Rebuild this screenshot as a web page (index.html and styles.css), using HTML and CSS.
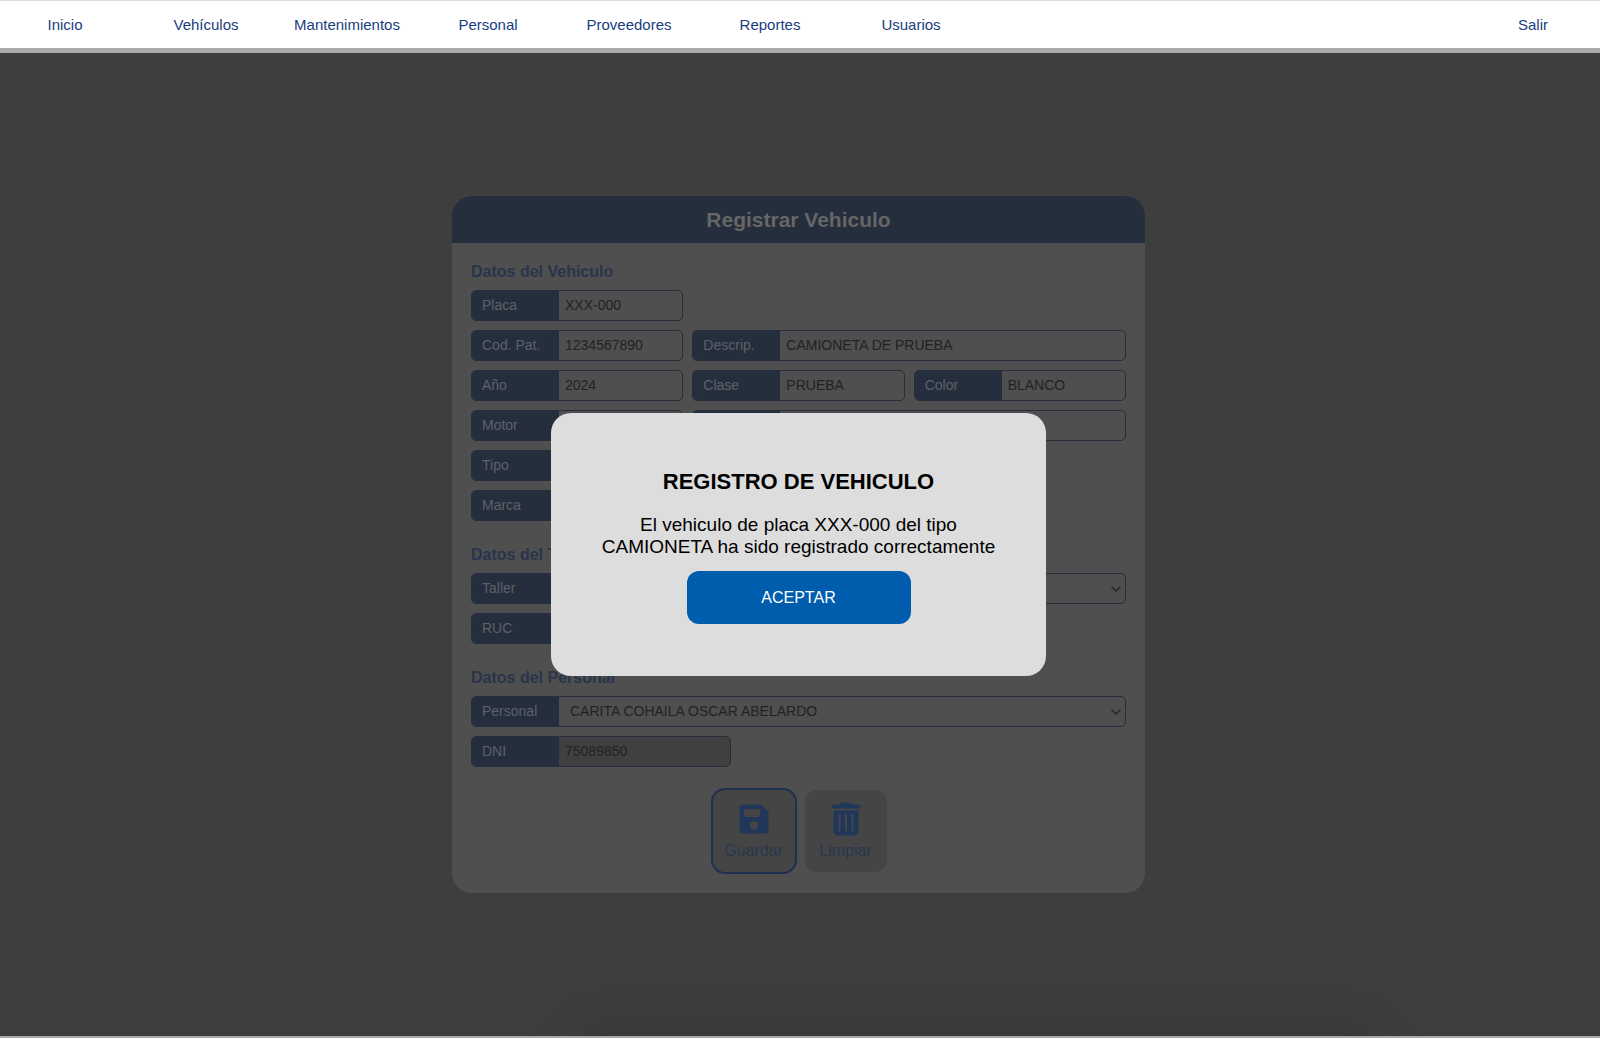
FILE: index.html
```html
<!DOCTYPE html>
<html lang="es">
<head>
<meta charset="utf-8">
<meta name="viewport" content="width=device-width, initial-scale=1">
<title>Registrar Vehiculo</title>
<link rel="stylesheet" href="styles.css">
</head>
<body>
<header class="topbar">
  <nav class="menu">
    <a href="#">Inicio</a>
    <a href="#">Vehículos</a>
    <a href="#">Mantenimientos</a>
    <a href="#">Personal</a>
    <a href="#">Proveedores</a>
    <a href="#">Reportes</a>
    <a href="#">Usuarios</a>
  </nav>
  <a class="logout" href="#">Salir</a>
</header>

<main class="stage">
  <form class="card">
    <h1 class="card-title">Registrar Vehiculo</h1>
    <div class="card-body">
      <h2 class="section-title">Datos del Vehiculo</h2>
      <div class="fields">
        <div class="field first"><label for="placa">Placa</label><input id="placa" type="text" value="XXX-000"></div>
        <div class="field first"><label for="codigo">Cod. Pat.</label><input id="codigo" type="text" value="1234567890"></div>
        <div class="field wide"><label for="descripcion">Descrip.</label><input id="descripcion" type="text" value="CAMIONETA DE PRUEBA"></div>
        <div class="field"><label for="anio">Año</label><input id="anio" type="text" value="2024"></div>
        <div class="field"><label for="clase">Clase</label><input id="clase" type="text" value="PRUEBA"></div>
        <div class="field"><label for="color">Color</label><input id="color" type="text" value="BLANCO"></div>
        <div class="field"><label for="motor">Motor</label><input id="motor" type="text"></div>
        <div class="field wide"><label for="serie"></label><input id="serie" type="text"></div>
        <div class="field first"><label for="tipo">Tipo</label><input id="tipo" type="text"></div>
        <div class="field first"><label for="marca">Marca</label><input id="marca" type="text"></div>
      </div>

      <h2 class="section-title">Datos del Taller</h2>
      <div class="fields">
        <div class="field full"><label for="taller">Taller</label><select id="taller"><option></option></select></div>
        <div class="field document"><label for="ruc">RUC</label><input id="ruc" type="text" disabled></div>
      </div>

      <h2 class="section-title">Datos del Personal</h2>
      <div class="fields">
        <div class="field full"><label for="personal">Personal</label><select id="personal"><option>CARITA COHAILA OSCAR ABELARDO</option></select></div>
        <div class="field document"><label for="dni">DNI</label><input id="dni" type="text" value="75089850" disabled></div>
      </div>

      <div class="actions">
        <button class="action active" type="button">
          <svg width="36" height="36" viewBox="0 0 36 36" aria-hidden="true"><path fill-rule="evenodd" d="M7 3.500H25L32.500 11V29a3.500 3.500 0 0 1-3.500 3.500H7A3.500 3.500 0 0 1 3.500 29V7A3.500 3.500 0 0 1 7 3.500ZM10 8a2 2 0 0 0-2 2v4a2 2 0 0 0 2 2H22a2 2 0 0 0 2-2v-4a2 2 0 0 0-2-2ZM18 20a4.200 4.200 0 1 0 0 8.400a4.200 4.200 0 0 0 0-8.400Z"/></svg>
          <span>Guardar</span>
        </button>
        <button class="action" type="button">
          <svg width="36" height="36" viewBox="0 0 36 36" aria-hidden="true"><path d="M5.500 3.500H12L13.500 1.500H22.500L24 3.500H30.500a2 2 0 0 1 0 4H5.500a2 2 0 0 1 0-4Z"/><path fill-rule="evenodd" d="M5.500 9.500H30.500V30a4.500 4.500 0 0 1-4.500 4.500H10A4.500 4.500 0 0 1 5.500 30ZM10.600 14V29.500a1 1 0 0 0 2 0V14a1 1 0 0 0-2 0ZM17 14V29.500a1 1 0 0 0 2 0V14a1 1 0 0 0-2 0ZM23.400 14V29.500a1 1 0 0 0 2 0V14a1 1 0 0 0-2 0Z"/></svg>
          <span>Limpiar</span>
        </button>
      </div>
    </div>
  </form>

  <div class="overlay">
    <section class="modal" role="dialog" aria-modal="true" aria-labelledby="modal-title">
      <h2 id="modal-title" class="modal-title">REGISTRO DE VEHICULO</h2>
      <p class="modal-text">El vehiculo de placa XXX-000 del tipo CAMIONETA ha sido registrado correctamente</p>
      <button class="accept" type="button">ACEPTAR</button>
    </section>
  </div>
</main>
</body>
</html>
```
FILE: styles.css
```css
* { box-sizing: border-box; }

body {
  margin: 0;
  min-height: 100vh;
  display: flex;
  flex-direction: column;
  font-family: "Liberation Sans", Arial, sans-serif;
  background: #3e3e3e;
  border-bottom: 2px solid #a8a8a8;
}

h1, h2, p { margin: 0; }

input, select, button { font: inherit; }

/* Navigation */
.topbar {
  display: flex;
  justify-content: space-between;
  align-items: center;
  height: 53px;
  padding-right: 2px;
  background: #fff;
  border-top: 1px solid #dedede;
  border-bottom: 5px solid #aaa;
}

.menu { display: flex; gap: 11px; }

.menu a, .logout {
  width: 130px;
  text-align: center;
  font-size: 15px;
  line-height: 20px;
  color: #1a3d80;
  text-decoration: none;
}

/* Registration card */
.stage {
  position: relative;
  flex: 1;
  display: flex;
  justify-content: center;
  align-items: center;
  padding-right: 3px;
  overflow: hidden;
}

.stage::after {
  content: "";
  position: absolute;
  top: 100%;
  left: 36%;
  right: 14%;
  height: 40px;
  border-radius: 20px;
  box-shadow: 0 0 50px 10px rgba(0, 0, 0, .12);
}

.card {
  width: 100%;
  max-width: 693px;
  border-radius: 20px;
  background: #4f4f4f;
  overflow: hidden;
}

.card-title {
  font-size: 21px;
  line-height: 47px;
  text-align: center;
  color: #666;
  background: #252e3d;
}

.card-body { padding: 19px; }

.section-title {
  margin-bottom: 8px;
  font-size: 16px;
  line-height: 20px;
  color: #29354c;
}

.fields + .section-title { margin-top: 24px; }

.fields {
  display: grid;
  grid-template-columns: repeat(3, 1fr);
  gap: 9px;
}

.field {
  display: flex;
  height: 31px;
  border: 1px solid #252e3d;
  border-radius: 5px;
  overflow: hidden;
  font-size: 14px;
  line-height: 29px;
}

.first { grid-column: 1; }
.wide { grid-column: span 2; }
.full { grid-column: 1 / -1; }
.document { grid-column: 1 / -1; width: 260px; }

.field label {
  flex: 0 0 87px;
  padding-left: 10px;
  color: #5e6167;
  background: #252e3d;
}

.field input, .field select {
  flex: 1;
  min-width: 0;
  padding: 0 6px;
  border: 0;
  border-radius: 0;
  color: #222;
  background: transparent;
}

.field input:disabled { background: #404040; }

.field select {
  appearance: none;
  padding-left: 11px;
  background: url("data:image/svg+xml,%3Csvg xmlns='http://www.w3.org/2000/svg' width='10' height='6'%3E%3Cpath d='M.5.5 5 5 9.500.5' fill='none' stroke='%23222' stroke-width='1.300'/%3E%3C/svg%3E") no-repeat right 4px center;
}

.actions {
  display: flex;
  justify-content: center;
  align-items: center;
  gap: 8px;
  margin-top: 21px;
}

.action {
  display: flex;
  flex-direction: column;
  align-items: center;
  justify-content: center;
  gap: 4px;
  width: 82px;
  height: 82px;
  padding: 0;
  border: 0;
  border-radius: 12px;
  font-size: 16px;
  line-height: 20px;
  color: #29384e;
  background: #454545;
}

.action svg { fill: #20375a; }

.action.active {
  width: 86px;
  height: 86px;
  border: 2px solid #1f2f52;
  border-radius: 14px;
}

/* Confirmation dialog */
.overlay {
  position: absolute;
  inset: 0;
  z-index: 1;
  display: flex;
  justify-content: center;
  align-items: center;
  padding-right: 3px;
}

.modal {
  display: flex;
  flex-direction: column;
  align-items: center;
  width: 100%;
  max-width: 495px;
  padding: 56px 48px 52px;
  border-radius: 20px;
  text-align: center;
  color: #000;
  background: #ddd;
}

.modal-title {
  margin-bottom: 19px;
  font-size: 22px;
  line-height: 26px;
}

.modal-text {
  margin-bottom: 13px;
  font-size: 19px;
  line-height: 22px;
}

.accept {
  width: 224px;
  height: 53px;
  border: 0;
  border-radius: 12px;
  font-size: 16px;
  color: #fff;
  background: #005cad;
}
```
